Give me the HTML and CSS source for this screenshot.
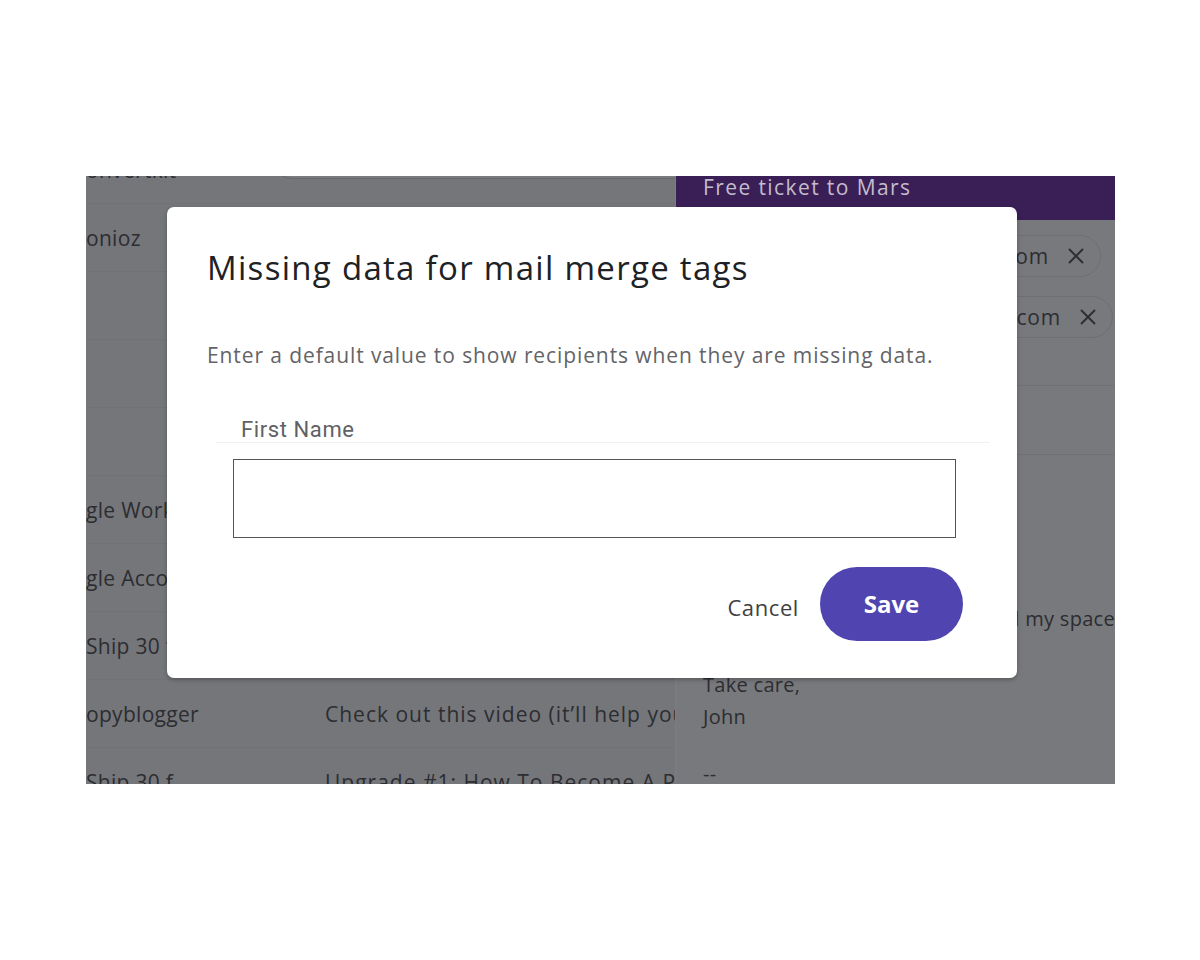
FILE: index.html
```html
<!DOCTYPE html>
<html lang="en">
<head>
    <meta charset="UTF-8">
    <title>Missing data for mail merge tags</title>
    <link rel="stylesheet" href="styles.css">
</head>
<body>
<div class="shot">
    <div class="mail">
        <div class="list">
            <div class="searchbar"></div>
            <div class="row"><span class="from">onvertkit</span><span class="subject">Welcome to the creator network</span></div>
            <div class="row"><span class="from">onioz</span><span class="subject"></span></div>
            <div class="row"><span class="from"></span><span class="subject"></span></div>
            <div class="row"><span class="from"></span><span class="subject"></span></div>
            <div class="row"><span class="from"></span><span class="subject"></span></div>
            <div class="row"><span class="from">gle Workspace</span><span class="subject"></span></div>
            <div class="row"><span class="from">gle Account</span><span class="subject"></span></div>
            <div class="row"><span class="from">Ship 30 for 30</span><span class="subject"></span></div>
            <div class="row"><span class="from">opyblogger</span><span class="subject">Check out this video (it’ll help you)</span></div>
            <div class="row"><span class="from">Ship 30 f.</span><span class="subject">Upgrade #1: How To Become A Pro</span></div>
        </div>
        <div class="pane">
            <div class="pane-head">Free ticket to Mars</div>
            <div class="chips">
                <div class="chip chip-a">john@convertkit.com
                    <svg class="x" width="18" height="18" viewBox="0 0 18 18"><path d="M2 2L16 16M16 2L2 16" stroke="#2e2f33" stroke-width="2" fill="none"/></svg>
                </div>
                <div class="chip chip-b">team@convertkit.com
                    <svg class="x" width="18" height="18" viewBox="0 0 18 18"><path d="M2 2L16 16M16 2L2 16" stroke="#2e2f33" stroke-width="2" fill="none"/></svg>
                </div>
            </div>
            <div class="pane-line"></div>
            <div class="pane-line"></div>
            <div class="body">
                <p class="spaced">Thanks for being here, I'd love to hear how you all my space</p>
                <p class="sign">Take care,<br>John</p>
                <p class="dash">--</p>
            </div>
        </div>
    </div>

    <div class="dialog">
        <h1>Missing data for mail merge tags</h1>
        <p class="hint">Enter a default value to show recipients when they are missing data.</p>
        <div class="field-label">First Name</div>
        <input class="field" type="text">
        <div class="actions">
            <button class="cancel">Cancel</button>
            <button class="save">Save</button>
        </div>
    </div>
</div>
</body>
</html>
```

FILE: styles.css
```css
body{
    margin: 0;
    background: #fff;
    font-family: "Open Sans", "Liberation Sans", sans-serif;
}
.shot{
    position: relative;
    width: 1029px;
    height: 608px;
    margin: 176px 0 0 86px;
    overflow: hidden;
    background: #75767a;
}
.mail{
    display: grid;
    grid-template-columns: 590px 439px;
    height: 100%;
}

/* inbox list, dimmed */
.list{
    position: relative;
    margin-top: -40px;
    border-right: 1px solid #7d7e81;
    overflow: hidden;
}
.searchbar{
    position: absolute;
    left: 185px;
    top: 0;
    width: 490px;
    height: 42px;
    border-radius: 0 0 22px 22px;
    background: #7a7b7f;
    box-shadow: 0 1px 1px rgba(0,0,0,.12);
}
.row{
    display: flex;
    align-items: center;
    height: 67px;
    border-bottom: 1px solid #717276;
    font-size: 21px;
    letter-spacing: .3px;
    color: #2c2d31;
    white-space: nowrap;
}
.from{
    flex: 0 0 239px;
    overflow: hidden;
}
.subject{
    flex: 1;
    overflow: hidden;
    letter-spacing: 1px;
}

/* reading pane */
.pane{
    background: #78797c;
    font-size: 20px;
    color: #2c2d31;
}
.pane-head{
    height: 44px;
    padding-left: 27px;
    line-height: 22px;
    background: #3a1f56;
    color: #c3bccc;
    font-size: 21px;
    letter-spacing: 1.4px;
}
.chips{
    display: flex;
    flex-direction: column;
    align-items: flex-end;
    gap: 19px;
    padding-top: 15px;
}
.chip{
    display: flex;
    align-items: center;
    height: 40px;
    padding: 0 15px 0 20px;
    border: 1px solid #6e6f73;
    border-radius: 21px;
    font-size: 21px;
    letter-spacing: .8px;
    white-space: nowrap;
}
.chip-a{ margin-right: 14px; }
.chip-b{ margin-right: 2px; }
.x{
    margin-left: 18px;
}
.pane-line{
    height: 1px;
    background: #707175;
    margin-top: 47px;
}
.pane-line + .pane-line{
    margin-top: 68px;
}
.body{
    padding-left: 27px;
    white-space: nowrap;
    font-size: 20px;
    letter-spacing: .3px;
}
.body p{
    margin: 0;
    line-height: 32px;
}
.spaced{
    margin-top: 148px !important;
    margin-left: -300px !important;
    text-align: right;
}
.sign{
    margin-top: 34px !important;
}
.dash{
    margin-top: 25px !important;
}

/* modal */
.dialog{
    position: absolute;
    left: 81px;
    top: 31px;
    width: 850px;
    height: 471px;
    box-sizing: border-box;
    padding: 41px 54px 0 40px;
    background: #fff;
    border-radius: 7px;
    box-shadow: 0 2px 4px rgba(0,0,0,.25);
}
.dialog h1{
    margin: 0;
    font-size: 33px;
    line-height: 40px;
    font-weight: 400;
    letter-spacing: 1.3px;
    color: #202124;
}
.hint{
    margin: 53px 0 0;
    font-size: 21px;
    line-height: 28px;
    letter-spacing: .9px;
    color: #636467;
}
.field-label{
    margin: 49px 0 0 9px;
    width: 749px;
    padding-left: 25px;
    font-family: Roboto, "Liberation Sans", sans-serif;
    font-size: 22px;
    line-height: 24px;
    letter-spacing: .6px;
    color: #606164;
    border-bottom: 1px solid #f4f0f0;
}
.field{
    display: block;
    box-sizing: border-box;
    width: 723px;
    height: 79px;
    margin: 16px 0 0 26px;
    border: 1px solid #555;
    outline: none;
}
.actions{
    display: flex;
    justify-content: flex-end;
    align-items: center;
    gap: 21px;
    margin-top: 29px;
}
.cancel{
    padding: 0;
    border: none;
    background: none;
    font-family: "Open Sans", "Liberation Sans", sans-serif;
    font-size: 22px;
    letter-spacing: .6px;
    color: #3f4043;
    margin-top: 6px;
}
.save{
    width: 143px;
    height: 74px;
    border: none;
    border-radius: 37px;
    background: #5045b0;
    color: #fff;
    font-family: "Open Sans", sans-serif;
    font-weight: 700;
    font-size: 24px;
    padding-bottom: 3px;
}
```
